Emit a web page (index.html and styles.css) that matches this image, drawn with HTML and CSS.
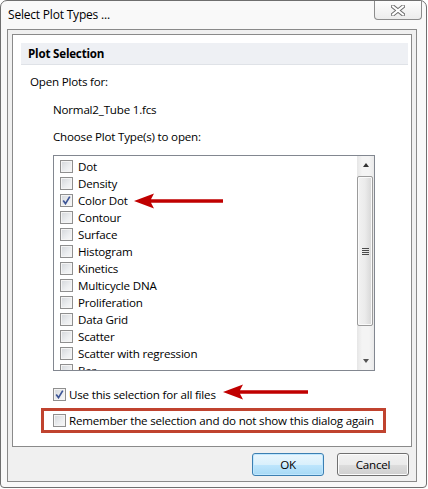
FILE: index.html
```html
<!DOCTYPE html>
<html>
<head>
<meta charset="utf-8">
<link rel="stylesheet" href="styles.css">
</head>
<body>
<div class="window">
  <div class="titlebar">
    <span class="title">Select Plot Types ...</span>
    <div class="close">
      <svg width="14" height="11" viewBox="0 0 14 11">
        <path d="M2 1.5 L12 9.5 M12 1.5 L2 9.5" stroke="#6d6d6d" stroke-width="4" stroke-linecap="square"/>
        <path d="M2 1.5 L12 9.5 M12 1.5 L2 9.5" stroke="#ffffff" stroke-width="2" stroke-linecap="square"/>
      </svg>
    </div>
  </div>
  <div class="client">
    <div class="panel">
      <div class="section-head">Plot Selection</div>
      <div class="label l1">Open Plots for:</div>
      <div class="label l2 gap1">Normal2_Tube 1.fcs</div>
      <div class="label l2 gap2">Choose Plot Type(s) to open:</div>
      <div class="listbox">
        <div class="items">
          <div class="item"><span class="cb"></span><span>Dot</span></div>
          <div class="item"><span class="cb"></span><span>Density</span></div>
          <div class="item with-arrow"><span class="cb checked"><svg width="9" height="9" viewBox="0 0 9 9"><path d="M1.2 4.4 L3.5 7.6 L7.8 0.6" fill="none" stroke="#3d5596" stroke-width="1.7"/></svg></span><span>Color Dot</span>
            <svg class="arrow arrow1" width="90" height="16" viewBox="0 0 90 16"><path d="M0 8 L20 0.5 L17 6.3 L89 6.3 L89 9.7 L17 9.7 L20 15.5 Z" fill="#c00000"/></svg>
          </div>
          <div class="item"><span class="cb"></span><span>Contour</span></div>
          <div class="item"><span class="cb"></span><span>Surface</span></div>
          <div class="item"><span class="cb"></span><span>Histogram</span></div>
          <div class="item"><span class="cb"></span><span>Kinetics</span></div>
          <div class="item"><span class="cb"></span><span>Multicycle DNA</span></div>
          <div class="item"><span class="cb"></span><span>Proliferation</span></div>
          <div class="item"><span class="cb"></span><span>Data Grid</span></div>
          <div class="item"><span class="cb"></span><span>Scatter</span></div>
          <div class="item"><span class="cb"></span><span>Scatter with regression</span></div>
          <div class="item"><span class="cb"></span><span>Bar</span></div>
        </div>
        <div class="scrollbar">
          <div class="sb-btn"><span class="tri up"></span></div>
          <div class="sb-track">
            <div class="thumb"><span class="grip"></span></div>
          </div>
          <div class="sb-btn"><span class="tri down"></span></div>
        </div>
      </div>
      <div class="opt use">
        <span class="cb checked"><svg width="9" height="9" viewBox="0 0 9 9"><path d="M1.2 4.4 L3.5 7.6 L7.8 0.6" fill="none" stroke="#3d5596" stroke-width="1.7"/></svg></span>
        <span>Use this selection for all files</span>
        <svg class="arrow arrow2" width="86" height="16" viewBox="0 0 86 16"><path d="M0 8 L20 0.5 L17 6.3 L85 6.3 L85 9.7 L17 9.7 L20 15.5 Z" fill="#c00000"/></svg>
      </div>
      <div class="remember">
        <span class="cb"></span>
        <span>Remember the selection and do not show this dialog again</span>
      </div>
    </div>
    <div class="buttons">
      <div class="btn ok">OK</div>
      <div class="btn">Cancel</div>
    </div>
  </div>
</div>
</body>
</html>
```

FILE: styles.css
```css
* { box-sizing: border-box; }
body {
  margin: 0;
  background: #ffffff;
  font-family: "Open Sans", "Noto Sans", sans-serif;
  font-size: 11.6px;
  letter-spacing: -0.2px;
  color: #000;
}
.window {
  width: 427px;
  height: 488px;
  border: 1px solid #6f6f6f;
  border-radius: 7px 7px 4px 4px;
  background: #f9f9f9;
  display: flex;
  flex-direction: column;
}
.titlebar {
  height: 28px;
  display: flex;
  justify-content: space-between;
  align-items: flex-start;
  flex: none;
}
.title {
  padding-left: 7px;
  line-height: 28px;
  font-size: 12px;
}
.close {
  width: 48px;
  height: 19px;
  margin-right: 4px;
  border: 1px solid #8c8c8c;
  border-top: none;
  border-radius: 0 0 4px 4px;
  background: linear-gradient(#fdfdfd, #ececec);
  display: flex;
  align-items: center;
  justify-content: center;
}
.client {
  margin-left: 6px;
  width: 410px;
  height: 453px;
  border: 1px solid #8a8a8a;
  background: #f0f0f0;
  flex: none;
}
.panel {
  margin: 4px 0 0 4px;
  width: 400px;
  height: 413px;
  border: 1px solid #8a8a8a;
  background: #ffffff;
  display: flex;
  flex-direction: column;
  align-items: flex-start;
}
.section-head {
  margin: 8px 0 0 8px;
  width: 387px;
  height: 22px;
  background: #eef0f4;
  border-bottom: 1px solid #dfe2e7;
  font-weight: bold;
  padding-left: 7px;
  line-height: 21px;
}
.label {
  line-height: 16px;
  height: 16px;
}
.l1 { margin: 9px 0 0 17px; }
.l2 { margin-left: 40px; }
.gap1 { margin-top: 12px; }
.gap2 { margin-top: 11px; }
.listbox {
  margin: 10px 0 0 40px;
  width: 322px;
  height: 216px;
  border: 1px solid #828790;
  display: flex;
}
.items {
  flex: 1;
  padding-top: 2px;
  overflow: hidden;
}
.item {
  height: 17px;
  display: flex;
  align-items: center;
  padding-left: 6px;
  gap: 5px;
  position: relative;
  white-space: nowrap;
}
.cb {
  width: 13px;
  height: 13px;
  flex: none;
  border: 1px solid #8f8f8f;
  background: linear-gradient(135deg, #d3d6da 0%, #eceef0 60%, #f8f8f8 100%);
  box-shadow: inset 0 0 0 1px #f4f4f4;
  display: flex;
  align-items: center;
  justify-content: center;
}
.cb svg { display: block; }
.arrow {
  position: absolute;
  top: 50%;
  transform: translateY(-50%);
}
.arrow1 { left: 80px; }
.scrollbar {
  width: 17px;
  flex: none;
  background: linear-gradient(90deg, #e6e6e6, #f4f4f4 30%, #f4f4f4 70%, #eaeaea);
  display: flex;
  flex-direction: column;
}
.sb-btn {
  height: 17px;
  flex: none;
  display: flex;
  align-items: center;
  justify-content: center;
}
.tri {
  width: 0;
  height: 0;
  border-left: 3.5px solid transparent;
  border-right: 3.5px solid transparent;
}
.tri.up { border-bottom: 4px solid #333; margin-top: 1px; }
.tri.down { border-top: 4px solid #555; margin-top: -1px; }
.sb-track {
  flex: 1;
  padding: 3px 0 0 0;
}
.thumb {
  width: 16px;
  height: 150px;
  border: 1px solid #9b9b9b;
  border-radius: 2px;
  background: linear-gradient(90deg, #f2f2f2, #ebebeb 50%, #d6d6d6);
  box-shadow: inset 0 0 0 1px #fafafa;
  display: flex;
  align-items: center;
  justify-content: center;
}
.grip {
  width: 7px;
  height: 7px;
  background: repeating-linear-gradient(#4a4a4a 0 1px, transparent 1px 2px);
}
.opt {
  margin: 15px 0 0 40px;
  height: 16px;
  display: flex;
  align-items: center;
  gap: 3px;
  position: relative;
  white-space: nowrap;
}
.arrow2 { left: 170px; top: 6px; }
.remember {
  margin: 6px 0 0 28px;
  width: 345px;
  height: 25px;
  border: 3px solid #c0432f;
  padding-left: 9px;
  display: flex;
  align-items: center;
  gap: 3px;
  white-space: nowrap;
}
.buttons {
  margin-top: 6px;
  padding-right: 7px;
  display: flex;
  justify-content: flex-end;
  gap: 13px;
}
.btn {
  width: 72px;
  height: 23px;
  border: 1px solid #707070;
  border-radius: 3px;
  background: linear-gradient(#f2f2f2 0%, #ebebeb 50%, #dddddd 51%, #cfcfcf 100%);
  box-shadow: inset 0 0 0 1px #fcfcfc;
  display: flex;
  align-items: center;
  justify-content: center;
}
.btn.ok {
  border-color: #3c7fb1;
  background: linear-gradient(#eaf6fd 0%, #d9f0fc 50%, #bee6fd 51%, #a7d9f5 100%);
  box-shadow: inset 0 0 0 1px #bfe7ff;
}
```
